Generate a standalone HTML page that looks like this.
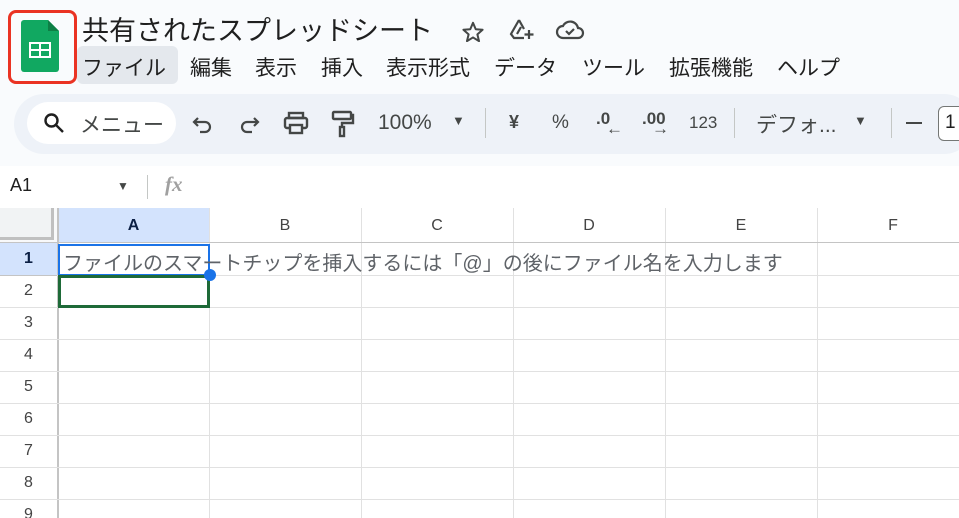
<!DOCTYPE html>
<html><head><meta charset="utf-8"><style>
*{margin:0;padding:0;box-sizing:border-box}
body{width:959px;height:518px;overflow:hidden;background:#f9fbfd;font-family:"Liberation Sans","Noto Sans CJK JP",sans-serif;color:#1f1f1f;position:relative}
.a{position:absolute;white-space:nowrap}
.menu span{position:absolute;top:0;font-size:21px}
.tb{position:absolute;left:14px;top:94px;width:960px;height:60px;background:#eef2f8;border-radius:30px}
.ic{position:absolute;font-size:19px;color:#444746}
.grid{position:absolute;left:0;top:208px;width:959px;height:310px;background:#fff;overflow:hidden}
.vl{position:absolute;top:0;width:1px;height:310px;background:#e1e1e1}
.hl{position:absolute;left:0;width:959px;height:1px;background:#e1e1e1}
.ch{position:absolute;top:0;height:35px;line-height:35px;text-align:center;font-size:16px;color:#444}
.rh{position:absolute;left:0;width:57px;text-align:center;font-size:16px;color:#444;height:32px;line-height:32px}
</style></head><body>
<div class="a" style="left:8px;top:10px;width:69px;height:74px;border:3px solid #ea3323;border-radius:8px"></div>
<svg class="a" style="left:21px;top:20px" width="38" height="52" viewBox="0 0 38 52"><path d="M3 0h24l11 11v38a3 3 0 0 1-3 3H3a3 3 0 0 1-3-3V3a3 3 0 0 1 3-3z" fill="#11a861"/><path d="M27 0l11 11H27z" fill="#0d7f45"/><rect x="8" y="22" width="22" height="16" fill="#fff"/><rect x="10" y="24" width="8" height="5" fill="#11a861"/><rect x="20" y="24" width="8" height="5" fill="#11a861"/><rect x="10" y="31" width="8" height="5" fill="#11a861"/><rect x="20" y="31" width="8" height="5" fill="#11a861"/></svg>
<div class="a" style="left:82px;top:9px;font-size:27px">共有されたスプレッドシート</div>
<svg class="a" style="left:462px;top:21px" width="22" height="21" viewBox="0 0 24 23" fill="none" stroke="#444746" stroke-width="2.2" stroke-linejoin="round"><path d="M12 2l3 7 7.5.6-5.7 5 1.8 7.4L12 18l-6.6 4 1.8-7.4-5.7-5L9 9z"/></svg>
<svg class="a" style="left:508px;top:17px" width="26" height="24" viewBox="0 0 26 24" fill="none" stroke="#444746" stroke-width="2.2"><path d="M11 3l-8 14 3 4h10M11 3l5 9M9 17l4-7"/><path d="M21 13v9M16.5 17.5h9"/></svg>
<svg class="a" style="left:555px;top:18px" width="30" height="22" viewBox="0 0 30 22" fill="none" stroke="#444746" stroke-width="2.2"><path d="M8 20h15a5 5 0 0 0 0-10 8 8 0 0 0-15-2A6 6 0 0 0 8 20z"/><path d="M11 13l3 3 5-5"/></svg>
<div class="a" style="left:77px;top:46px;width:101px;height:38px;background:#e4e8ed;border-radius:6px"></div>
<div class="menu a" style="left:0;top:52px;width:959px;height:30px">
<span style="left:82px">ファイル</span><span style="left:190px">編集</span><span style="left:255px">表示</span><span style="left:321px">挿入</span><span style="left:386px">表示形式</span><span style="left:494px">データ</span><span style="left:582px">ツール</span><span style="left:669px">拡張機能</span><span style="left:777px">ヘルプ</span></div>
<div class="tb"></div>
<div class="a" style="left:27px;top:102px;width:149px;height:42px;background:#fff;border-radius:21px"></div>
<svg class="a" style="left:43px;top:112px" width="22" height="22" viewBox="0 0 22 22" fill="none" stroke="#1f1f1f" stroke-width="2.4"><circle cx="8.5" cy="8.5" r="6"/><path d="M13 13l7 7"/></svg>
<div class="a" style="left:80px;top:109px;font-size:21px;color:#444746">メニュー</div>
<svg class="a" style="left:192px;top:113px" width="22" height="22" viewBox="0 0 22 22" fill="none" stroke="#444746" stroke-width="2.2"><path d="M6 5L2 9l4 4"/><path d="M2 9h11a5 5 0 0 1 0 10H8"/></svg>
<svg class="a" style="left:238px;top:113px" width="22" height="22" viewBox="0 0 22 22" fill="none" stroke="#444746" stroke-width="2.2"><path d="M16 5l4 4-4 4"/><path d="M20 9H9a5 5 0 0 0 0 10h5"/></svg>
<svg class="a" style="left:283px;top:111px" width="26" height="24" viewBox="0 0 26 24" fill="none" stroke="#444746" stroke-width="2.4"><rect x="6" y="2" width="14" height="5"/><rect x="2" y="7" width="22" height="10" rx="2"/><rect x="7" y="14" width="12" height="8" fill="#eef2f8"/></svg>
<svg class="a" style="left:331px;top:110px" width="24" height="28" viewBox="0 0 24 28" fill="none" stroke="#444746" stroke-width="2.4"><rect x="2" y="2" width="18" height="7" rx="1"/><path d="M20 5h2v8H11v4"/><rect x="9" y="17" width="4" height="9"/></svg>
<div class="a" style="left:378px;top:111px;font-size:21px;color:#444746">100%</div>
<div class="ic" style="left:452px;top:113px;font-size:13px">▼</div>
<div class="a" style="left:485px;top:108px;width:1px;height:30px;background:#c4c7c5"></div>
<div class="ic" style="left:509px;top:112px;font-size:18px;font-weight:bold">¥</div>
<div class="ic" style="left:552px;top:112px;font-size:19px">%</div>
<div class="ic" style="left:596px;top:109px;font-size:17px;font-weight:bold">.0</div>
<div class="ic" style="left:606px;top:119px;font-size:17px;font-weight:bold">←</div>
<div class="ic" style="left:642px;top:109px;font-size:17px;font-weight:bold">.00</div>
<div class="ic" style="left:652px;top:119px;font-size:17px;font-weight:bold">→</div>
<div class="ic" style="left:689px;top:113px;font-size:17px">123</div>
<div class="a" style="left:734px;top:108px;width:1px;height:30px;background:#c4c7c5"></div>
<div class="a" style="left:756px;top:109px;font-size:21px;color:#444746">デフォ...</div>
<div class="ic" style="left:854px;top:113px;font-size:13px">▼</div>
<div class="a" style="left:891px;top:108px;width:1px;height:30px;background:#c4c7c5"></div>
<div class="a" style="left:906px;top:122px;width:16px;height:2px;background:#444746"></div>
<div class="a" style="left:938px;top:106px;width:30px;height:35px;border:1px solid #747775;border-radius:6px;background:#fff;font-size:19px;padding:5px 0 0 6px">1</div>
<div class="a" style="left:0;top:166px;width:959px;height:42px;background:#fff"></div>
<div class="a" style="left:10px;top:175px;font-size:18px">A1</div>
<div class="ic" style="left:117px;top:179px;font-size:12px">▼</div>
<div class="a" style="left:147px;top:175px;width:1px;height:24px;background:#c4c7c5"></div>
<div class="a" style="left:165px;top:172px;font-size:21px;color:#a0a0a0;font-style:italic;font-family:'Liberation Serif',serif;font-weight:bold">fx</div>
<div class="grid">
<div class="a" style="left:0;top:0;width:58px;height:35px;background:#f8f9fa"></div>
<div class="a" style="left:0;top:0;width:54px;height:32px;border-right:3px solid #c0c0c0;border-bottom:3px solid #c0c0c0;background:#f1f3f4"></div>
<div class="a" style="left:58px;top:0;width:151px;height:35px;background:#d3e3fd"></div>
<div class="a" style="left:0;top:35px;width:57px;height:32px;background:#d3e3fd"></div>
<div class="vl" style="left:57px;background:#c4c4c4;width:2px"></div>
<div class="vl" style="left:209px"></div><div class="vl" style="left:361px"></div><div class="vl" style="left:513px"></div><div class="vl" style="left:665px"></div><div class="vl" style="left:817px"></div>
<div class="hl" style="top:34px;background:#c4c4c4"></div>
<div class="hl" style="top:67px"></div><div class="hl" style="top:99px"></div><div class="hl" style="top:131px"></div><div class="hl" style="top:163px"></div><div class="hl" style="top:195px"></div><div class="hl" style="top:227px"></div><div class="hl" style="top:259px"></div><div class="hl" style="top:291px"></div>
<div class="a" style="left:0;top:67px;width:57px;height:1px;background:#c4c4c4"></div>
<div class="ch" style="left:58px;width:151px;font-weight:bold;color:#0b1f44">A</div>
<div class="ch" style="left:209px;width:152px">B</div><div class="ch" style="left:361px;width:152px">C</div><div class="ch" style="left:513px;width:152px">D</div><div class="ch" style="left:665px;width:152px">E</div><div class="ch" style="left:817px;width:152px">F</div>
<div class="rh" style="top:35px;font-weight:bold;color:#0b1f44">1</div>
<div class="rh" style="top:67px">2</div><div class="rh" style="top:99px">3</div><div class="rh" style="top:131px">4</div><div class="rh" style="top:163px">5</div><div class="rh" style="top:195px">6</div><div class="rh" style="top:227px">7</div><div class="rh" style="top:259px">8</div><div class="rh" style="top:291px">9</div>
<div class="a" style="left:58px;top:36px;width:152px;height:32px;border:2px solid #1a73e8"></div>
<div class="a" style="left:58px;top:67px;width:152px;height:33px;border:3px solid #1e6a38"></div>
<div class="a" style="left:204px;top:61px;width:12px;height:12px;border-radius:50%;background:#1a73e8"></div>
<div class="a" style="left:63px;top:39px;font-size:20px;color:#5f6368">ファイルのスマートチップを挿入するには「@」の後にファイル名を入力します</div>
</div>
</body></html>
